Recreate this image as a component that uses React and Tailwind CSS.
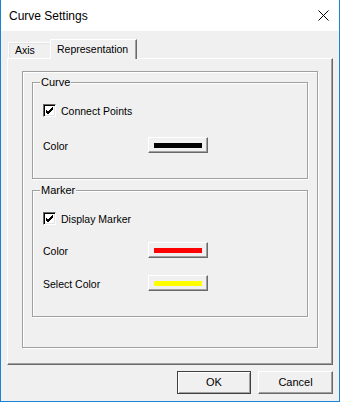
import React from 'react';

const font = { fontFamily: '"Liberation Sans", Arial, sans-serif' };

function Check() {
  return (
    <div className="w-[13px] h-[13px] shrink-0 bg-white border border-t-[#696969] border-l-[#696969] border-r-white border-b-white shadow-[inset_1px_1px_0_#000,inset_-1px_-1px_0_#e3e3e3] flex items-center justify-center">
      <svg width="9" height="9" viewBox="0 0 9 9">
        <path d="M1 4 L3 6 L8 1 M1 5 L3 7 L8 2 M1 6 L3 8 L8 3" stroke="#000" strokeWidth="1" fill="none" shapeRendering="crispEdges" />
      </svg>
    </div>
  );
}

function ColorButton({ color }) {
  return (
    <div className="w-[60px] h-[16px] shrink-0 bg-[#f0f0f0] border border-t-white border-l-white border-r-[#696969] border-b-[#696969] shadow-[inset_-1px_-1px_0_#a0a0a0] flex items-center justify-center">
      <div className={`w-[48px] h-[5px] ${color}`} />
    </div>
  );
}

function Group({ label, height, children }) {
  return (
    <div className={`relative w-[276px] ${height} border border-[#a0a0a0] shadow-[1px_1px_0_#fff,inset_1px_1px_0_#fff]`}>
      <span className="absolute left-[7px] top-[-8px] px-px bg-[#f0f0f0] text-[11px] leading-[14px]">{label}</span>
      <div className="flex flex-col pl-[10px]">{children}</div>
    </div>
  );
}

function CheckRow({ label }) {
  return (
    <div className="flex items-center gap-[5px] h-[13px] mt-[21px]">
      <Check />
      <span className="text-[10.5px] leading-[13px] pt-px">{label}</span>
    </div>
  );
}

function ColorRow({ label, color, mt }) {
  return (
    <div className={`flex items-center h-[16px] ${mt}`}>
      <span className="w-[105px] text-[10.5px] leading-[16px] pt-[2px]">{label}</span>
      <ColorButton color={color} />
    </div>
  );
}

export default function App() {
  return (
    <div className="w-[340px] h-[402px] flex flex-col bg-[#f0f0f0] border-x border-b border-[#1883d7] text-black" style={font}>
      {/* title bar */}
      <div className="h-[31px] shrink-0 bg-white flex items-center justify-between pl-2 pr-[10px]">
        <span className="text-[12px]">Curve Settings</span>
        <svg width="11" height="11" viewBox="0 0 11 11">
          <path d="M0.5 0.5 L10.5 10.5 M10.5 0.5 L0.5 10.5" stroke="#000" strokeWidth="1" />
        </svg>
      </div>

      {/* tabs */}
      <div className="pl-[6px] pt-[8px]">
        <div className="flex items-end h-[19px] relative z-10">
          <div className="ml-px w-[42px] h-[16px] border-t border-l border-white shadow-[inset_1px_1px_0_#e3e3e3] flex items-center pl-[6px] pt-px text-[10.5px]">
            Axis
          </div>
          <div className="w-[87px] h-[20px] -mb-px bg-[#f0f0f0] border-t border-l border-r border-t-white border-l-white border-r-[#696969] shadow-[inset_-1px_0_0_#a0a0a0] flex items-start pt-[2px] pl-[6px] text-[10.5px]">
            Representation
          </div>
        </div>

        <div className="w-[326px] h-[307px] border border-t-white border-l-white border-r-[#696969] border-b-[#696969] shadow-[inset_-1px_-1px_0_#a0a0a0]">
          <div className="ml-[14px] mt-[12px] w-[296px] h-[277px] border border-[#a0a0a0] shadow-[1px_1px_0_#fff,inset_1px_1px_0_#fff] pl-[9px] pt-[10px]">
            <Group label="Curve" height="h-[97px]">
              <CheckRow label="Connect Points" />
              <ColorRow label="Color" color="bg-black" mt="mt-[20px]" />
            </Group>

            <div className="mt-[11px]">
              <Group label="Marker" height="h-[127px]">
                <CheckRow label="Display Marker" />
                <ColorRow label="Color" color="bg-[#ff0000]" mt="mt-[17px]" />
                <ColorRow label="Select Color" color="bg-[#ffff00]" mt="mt-[17px]" />
              </Group>
            </div>
          </div>
        </div>
      </div>

      {/* buttons */}
      <div className="flex justify-end gap-[7px] pr-[6px] mt-[6px]">
        <button className="w-[74px] h-[23px] bg-[#f0f0f0] border border-[#404040] shadow-[inset_1px_1px_0_#fff,inset_-1px_-1px_0_#a0a0a0] text-[11px]">
          OK
        </button>
        <button className="w-[75px] h-[23px] bg-[#f0f0f0] border border-t-white border-l-white border-r-[#696969] border-b-[#696969] shadow-[inset_-1px_-1px_0_#a0a0a0] text-[11px]">
          Cancel
        </button>
      </div>
    </div>
  );
}
